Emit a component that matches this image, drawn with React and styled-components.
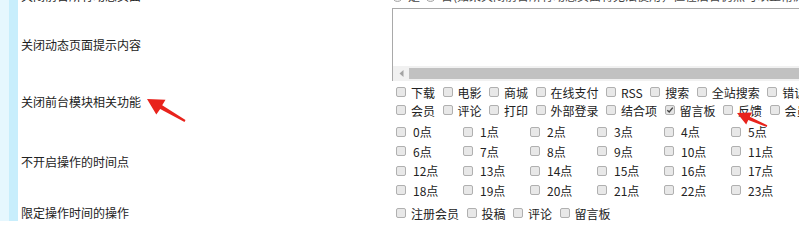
import React from "react";
import styled, { createGlobalStyle } from "styled-components";

const GlobalStyle = createGlobalStyle`
  html, body {
    margin: 0;
    padding: 0;
    background: #fff;
    overflow: hidden;
  }
  body {
    font-family: "Noto Sans CJK SC", "Microsoft YaHei", sans-serif;
    font-size: 12px;
    color: #222;
  }
`;

const modules1 = ["下载", "电影", "商城", "在线支付", "RSS", "搜索", "全站搜索", "错误报告", "专题"];
const modules2 = ["会员", "评论", "打印", "外部登录", "结合项", "留言板", "反馈", "会员空间", "投票"];
const hours = Array.from({ length: 24 }, (_, i) => `${i}点`);
const limited = ["注册会员", "投稿", "评论", "留言板"];

const Check = ({ label, checked }) => (
  <Item>
    <Box $checked={checked}>
      {checked && (
        <svg width="8" height="8" viewBox="0 0 8 8">
          <path d="M1.3 4.2 L3.2 6 L6.8 1.6" fill="none" stroke="#444" strokeWidth="1.4" />
        </svg>
      )}
    </Box>
    <span>{label}</span>
  </Item>
);

const App = () => {
  return (
    <>
      <GlobalStyle />
      <Page>
        <Strip />
        <Main>
          <Form>
            <Label>关闭前台所有动态页面</Label>
            <Field>
              <Radios>
                <Radio $on />
                <span>是</span>
                <Radio />
                <span>否(如果关闭前台所有动态页面将无法使用，但在后台仍然可以正常浏览生成的静态页面)</span>
              </Radios>
            </Field>

            <Label>关闭动态页面提示内容</Label>
            <Field $pad="2px 0">
              <TextBox>
                <Area defaultValue="" />
                <HScroll>
                  <ArrowBtn>
                    <svg width="5" height="7" viewBox="0 0 5 7">
                      <path d="M4.5 0 L0.5 3.5 L4.5 7 Z" fill="#a3a3a3" />
                    </svg>
                  </ArrowBtn>
                  <Thumb />
                </HScroll>
              </TextBox>
            </Field>

            <Label>关闭前台模块相关功能</Label>
            <Field $pad="0 0 2px">
              <Line>
                {modules1.map((m) => (
                  <Check key={m} label={m} />
                ))}
              </Line>
              <Line>
                {modules2.map((m) => (
                  <Check key={m} label={m} checked={m === "留言板"} />
                ))}
              </Line>
            </Field>

            <Label>不开启操作的时间点</Label>
            <Field $pad="1px 0 2px">
              <HourGrid>
                {hours.map((h) => (
                  <HourCell key={h}>
                    <Box />
                    <span>{h}</span>
                  </HourCell>
                ))}
              </HourGrid>
            </Field>

            <Label>限定操作时间的操作</Label>
            <Field>
              <Line>
                {limited.map((m) => (
                  <Check key={m} label={m} />
                ))}
              </Line>
            </Field>
          </Form>
        </Main>
        <Marks width="799" height="221" viewBox="0 0 799 221">
          <polygon
            points="147,99 165.5,99.8 162.2,105.3 185.5,120.1 184.5,121.9 160.2,108.9 156.3,114.6"
            fill="#e8231c"
          />
          <polygon
            points="737,113 752,112.5 749.8,116.8 767.3,125.3 766.7,126.9 748.3,120.1 746.2,124.5"
            fill="#e8231c"
          />
        </Marks>
      </Page>
    </>
  );
};

export default App;

const Page = styled.div`
  position: relative;
  display: flex;
  width: 799px;
  height: 221px;
  overflow: hidden;
`;

const Strip = styled.div`
  flex: 0 0 18px;
  background: linear-gradient(to right, #e6f7fe 0, #e6f7fe 9px, #c8eefc 9px, #c8eefc 18px);
`;

const Main = styled.div`
  flex: 1;
  min-width: 0;
`;

const Form = styled.div`
  display: grid;
  grid-template-columns: 374px 1fr;
  margin-top: -14px;
`;

const Label = styled.div`
  align-self: center;
  padding-left: 3px;
  line-height: 18px;
  white-space: nowrap;
`;

const Field = styled.div`
  padding: ${(p) => p.$pad || "2px 0"};
  min-width: 0;
  overflow: hidden;
`;

const Radios = styled.div`
  display: flex;
  align-items: center;
  gap: 5px;
  height: 16px;
  line-height: 16px;
  white-space: nowrap;
  color: #444;
`;

const Radio = styled.span`
  flex: 0 0 auto;
  width: 9px;
  height: 9px;
  border: 1px solid #a6a6a6;
  border-radius: 50%;
  background: ${(p) => (p.$on ? "radial-gradient(circle, #555 0 2px, #eee 2.5px)" : "#eee")};
`;

const TextBox = styled.div`
  width: 620px;
  border: 1px solid #a9a9a9;
  border-bottom: none;
  background: #fff;
`;

const Area = styled.textarea`
  display: block;
  width: 100%;
  height: 57px;
  margin: 0;
  padding: 2px;
  border: none;
  outline: none;
  resize: none;
  box-sizing: border-box;
  font: inherit;
`;

const HScroll = styled.div`
  display: flex;
  align-items: stretch;
  height: 15px;
  background: #f1f1f1;
`;

const ArrowBtn = styled.div`
  flex: 0 0 16px;
  display: flex;
  align-items: center;
  justify-content: center;
`;

const Thumb = styled.div`
  flex: 1;
  margin: 2px 0;
  background: #c1c1c1;
`;

const Line = styled.div`
  display: flex;
  align-items: center;
  height: 18px;
  padding-left: 4px;
  white-space: nowrap;
`;

const Item = styled.label`
  display: inline-flex;
  align-items: center;
  margin-right: 7.5px;
  flex: 0 0 auto;
`;

const Box = styled.span`
  flex: 0 0 auto;
  display: inline-flex;
  align-items: center;
  justify-content: center;
  box-sizing: border-box;
  width: 10px;
  height: 10px;
  margin-right: 5px;
  border: 1px solid #b0b0b0;
  border-radius: 2px;
  background: ${(p) => (p.$checked ? "#e4e4e4" : "#e8e8e8")};
`;

const HourGrid = styled.div`
  display: grid;
  grid-template-columns: repeat(6, 67px);
  grid-auto-rows: 19.5px;
  padding-left: 4px;
`;

const HourCell = styled.label`
  display: flex;
  align-items: center;
  white-space: nowrap;

  ${Box} {
    margin-right: 7px;
  }
`;

const Marks = styled.svg`
  position: absolute;
  left: 0;
  top: 0;
  pointer-events: none;
`;
